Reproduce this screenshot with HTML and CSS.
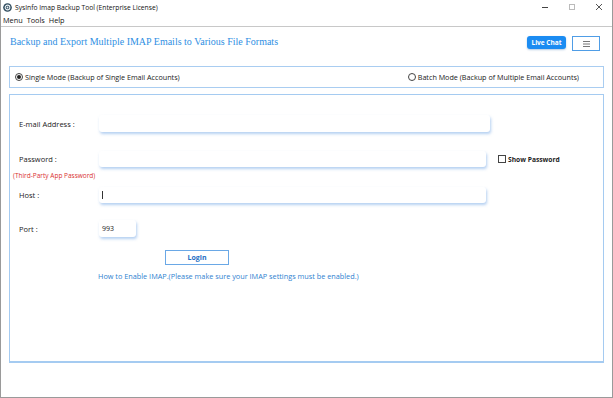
FILE: index.html
```html
<!DOCTYPE html>
<html>
<head>
<meta charset="utf-8">
<link rel="stylesheet" href="styles.css">
</head>
<body>
<div class="window">
  <div class="titlebar">
    <svg class="appicon" width="9" height="9" viewBox="0 0 10 10">
      <circle cx="5" cy="5" r="4.8" fill="#2f4b5d"/>
      <circle cx="5" cy="5" r="2.6" fill="none" stroke="#e8eef2" stroke-width="1.2"/>
      <circle cx="5" cy="5" r="1" fill="#e8eef2"/>
    </svg>
    <span class="title">SysInfo Imap Backup Tool (Enterprise License)</span>
    <div class="controls">
      <svg width="8" height="8" viewBox="0 0 8 8"><line x1="1" y1="4.5" x2="7" y2="4.5" stroke="#444" stroke-width="1"/></svg>
      <svg width="8" height="8" viewBox="0 0 8 8"><rect x="1.5" y="1.5" width="5" height="5" fill="none" stroke="#bbb" stroke-width="1"/></svg>
      <svg width="8" height="8" viewBox="0 0 8 8"><path d="M1 1L7 7M7 1L1 7" stroke="#444" stroke-width="0.9"/></svg>
    </div>
  </div>
  <div class="menubar">
    <span>Menu</span><span>Tools</span><span>Help</span>
  </div>
  <div class="header">
    <h1 class="headline">Backup and Export Multiple IMAP Emails to Various File Formats</h1>
    <div class="header-actions">
      <button class="livechat">Live Chat</button>
      <button class="hamburger">
        <svg width="7" height="6" viewBox="0 0 7 6"><path d="M0 0.5H7M0 3H7M0 5.5H7" stroke="#555" stroke-width="0.8"/></svg>
      </button>
    </div>
  </div>
  <div class="modepanel">
    <label class="mode"><span class="radio checked"></span>Single Mode (Backup of Single Email Accounts)</label>
    <label class="mode"><span class="radio"></span>Batch Mode (Backup of Multiple Email Accounts)</label>
  </div>
  <div class="mainpanel">
    <div class="row row-email">
      <span class="label">E-mail Address :</span>
      <div class="input w-email"></div>
    </div>
    <div class="row row-pass">
      <span class="label">Password :</span>
      <div class="input w-long"></div>
      <label class="showpass"><span class="check"></span>Show Password</label>
    </div>
    <div class="note">(Third-Party App Password)</div>
    <div class="row row-host">
      <span class="label">Host :</span>
      <div class="input w-long"><span class="caret"></span></div>
    </div>
    <div class="row row-port">
      <span class="label">Port :</span>
      <div class="input w-port"><span class="value">993</span></div>
    </div>
    <div class="loginrow"><button class="login">Login</button></div>
    <div class="link">How to Enable IMAP.(Please make sure your IMAP settings must be enabled.)</div>
  </div>
</div>
</body>
</html>
```

FILE: styles.css
```css
html, body {
  margin: 0;
  padding: 0;
  background: #fff;
}
.window {
  box-sizing: border-box;
  width: 613px;
  height: 398px;
  border: 1px solid #9a9a9a;
  border-top: none;
  font-family: "Open Sans", "Noto Sans", sans-serif;
  color: #222;
  background: #fff;
}
.titlebar {
  height: 14px;
  display: flex;
  align-items: center;
  padding-left: 2px;
}
.appicon { margin-right: 3px; }
.title {
  font-size: 6.7px;
  color: #111;
}
.controls {
  margin-left: auto;
  display: flex;
  gap: 19px;
  margin-right: 9px;
}
.menubar {
  height: 12px;
  display: flex;
  align-items: center;
  gap: 4px;
  padding-left: 2px;
  font-size: 7.3px;
  color: #111;
  border-bottom: 1px solid #c8c8c8;
}
.header {
  height: 30px;
  display: flex;
  align-items: center;
  padding: 0 12px 0 9px;
  margin-top: 4px;
}
.headline {
  margin: 0;
  font-family: "Liberation Serif", serif;
  font-weight: normal;
  font-size: 10px;
  color: #2f8fe3;
  margin-top: -9px;
}
.header-actions {
  margin-left: auto;
  display: flex;
  align-items: flex-start;
  gap: 6px;
  margin-top: -5px;
}
.livechat {
  width: 39px;
  height: 13px;
  padding: 0;
  border: none;
  border-radius: 3px;
  background: #1b8cf2;
  color: #fff;
  font-family: "Open Sans", sans-serif;
  font-weight: bold;
  font-size: 6.5px;
  box-shadow: 0 1px 2px rgba(0, 80, 160, 0.3);
}
.hamburger {
  width: 28px;
  height: 15px;
  padding: 0;
  border: 1px solid #4f9de6;
  background: #fff;
  display: flex;
  align-items: center;
  justify-content: center;
}
.modepanel {
  margin: 5px 8px 0 8px;
  height: 20px;
  border: 1px solid #a9cdf1;
  display: flex;
  align-items: center;
  justify-content: space-between;
  padding: 0 24px 0 5px;
  font-size: 7.2px;
}
.mode {
  display: flex;
  align-items: center;
  gap: 2px;
  color: #222;
}
.radio {
  box-sizing: border-box;
  width: 8px;
  height: 8px;
  border: 1px solid #444;
  border-radius: 50%;
  display: inline-block;
  position: relative;
}
.radio.checked::after {
  content: "";
  position: absolute;
  left: 1px;
  top: 1px;
  width: 4px;
  height: 4px;
  border-radius: 50%;
  background: #222;
}
.mainpanel {
  margin: 6px 8px 0 8px;
  height: 269px;
  border: 1px solid #a5cbf1;
  border-bottom: 2px solid #a5cbf1;
  padding: 20px 0 0 0;
  box-sizing: border-box;
  display: flex;
  flex-direction: column;
}
.row {
  display: flex;
  align-items: center;
}
.label {
  width: 89px;
  padding-left: 9px;
  box-sizing: border-box;
  font-size: 7.5px;
  color: #222;
}
.input {
  height: 17px;
  background: #fff;
  border-radius: 3px;
  box-shadow: 1px 2px 3px rgba(120, 170, 230, 0.55);
  display: flex;
  align-items: center;
  padding-left: 3px;
  box-sizing: border-box;
}
.w-email { width: 391px; }
.w-long { width: 387px; height: 16px; }
.w-port { width: 37px; }
.row-pass { margin-top: 19px; }
.note {
  margin-top: 4px;
  padding-left: 3px;
  font-size: 6.5px;
  color: #d93030;
  height: 9px;
  line-height: 9px;
}
.row-host { margin-top: 7px; }
.row-port { margin-top: 17px; }
.caret {
  width: 1px;
  height: 8px;
  background: #333;
}
.value { font-size: 7px; color: #222; }
.showpass {
  margin-left: 12px;
  display: flex;
  align-items: center;
  gap: 2px;
  font-size: 6.7px;
  font-weight: bold;
  color: #222;
}
.check {
  box-sizing: border-box;
  width: 8px;
  height: 8px;
  border: 1px solid #444;
  background: #fff;
  display: inline-block;
}
.loginrow {
  display: flex;
  margin-top: 13px;
  padding-left: 155px;
}
.login {
  width: 64px;
  height: 15px;
  padding: 0;
  background: #fff;
  border: 1px solid #6aa8e6;
  color: #1f6fc4;
  font-family: "Open Sans", sans-serif;
  font-weight: bold;
  font-size: 7px;
}
.link {
  margin-top: 6px;
  padding-left: 88px;
  font-size: 7.3px;
  color: #2f7fd0;
}
```
